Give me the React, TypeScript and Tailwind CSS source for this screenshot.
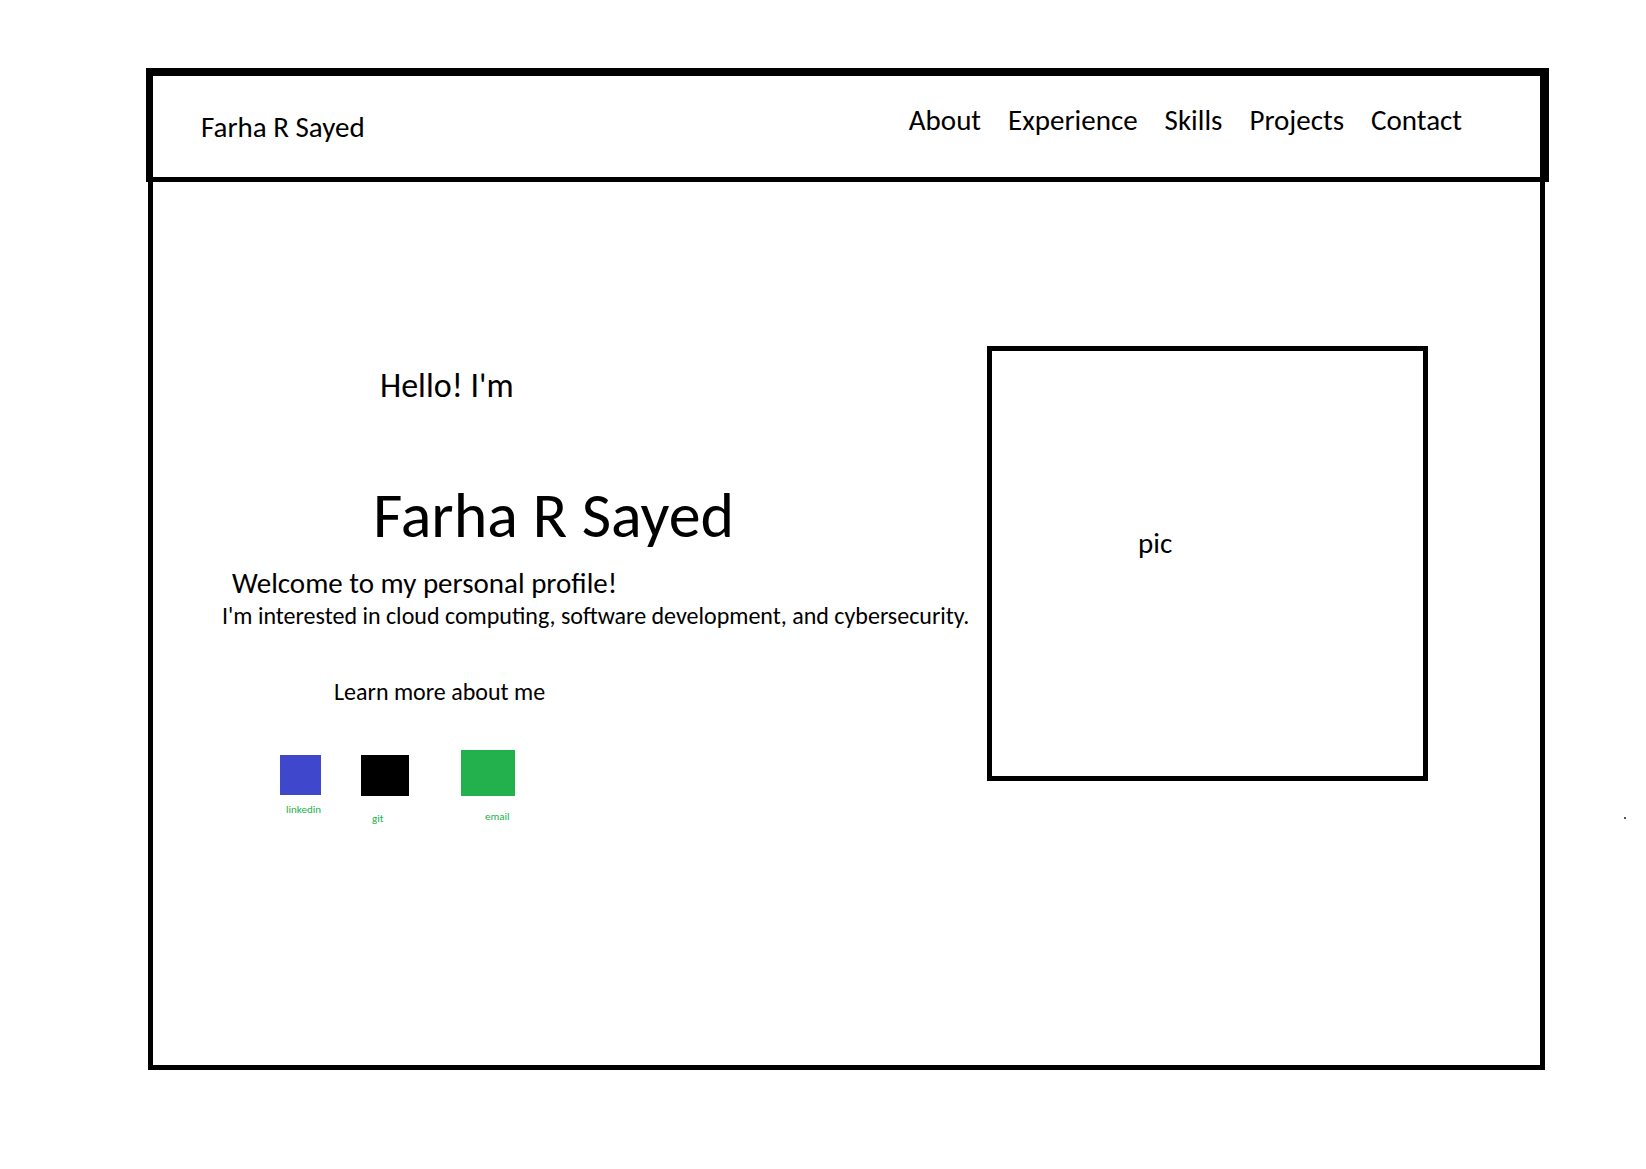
const navItems = ["About", "Experience", "Skills", "Projects", "Contact"];

function SocialLink({ label, block, text }: { label: string; block: string; text: string }) {
  return (
    <a href={`#${label}`} className="flex flex-col text-[11px] leading-3 text-[#22b14c]">
      <span className={block} />
      <span className={text}>{label}</span>
    </a>
  );
}

export default function App() {
  return (
    <div className="relative min-h-screen bg-white pt-[68px] pr-[97px] pb-[99px] pl-[146px] font-['Carlito','Lato',sans-serif] text-black">
      <header className="flex justify-between border-t-8 border-r-9 border-b-5 border-l-7 border-black pr-[78px] pb-[33px] pl-[48px]">
        <a href="#home" className="pt-[34px] text-[29px] leading-[34px]">Farha R Sayed</a>
        <nav className="flex gap-[27px] pt-[27px] text-[29px] leading-[34px]">
          {navItems.map((item) => (
            <a key={item} href={`#${item}`}>{item}</a>
          ))}
        </nav>
      </header>

      <main className="mr-[4px] ml-[2px] flex items-start border-r-5 border-b-5 border-l-5 border-black pt-[164px] pr-[112px] pb-[240px]">
        <section className="flex min-w-0 flex-1 flex-col items-start pt-[19px] whitespace-nowrap">
          <p className="ml-[227px] text-[34px] leading-[42px]">Hello! I'm</p>
          <h1 className="mt-[70px] ml-[220px] text-[64px] leading-[76px]">Farha R Sayed</h1>
          <p className="mt-[13px] ml-[79px] text-[29px] leading-[34px]">Welcome to my personal profile!</p>
          <p className="mt-px ml-[69px] text-[24px] leading-[30px]">I'm interested in cloud computing, software development, and cybersecurity.</p>
          <a href="#about" className="mt-[46px] ml-[181px] text-[24px] leading-[30px]">Learn more about me</a>
          <div className="mt-[43px] ml-[127px] flex items-start">
            <SocialLink label="linkedin" block="mt-[5px] h-[40px] w-[41px] bg-[#3f48cc]" text="mt-[9px] pl-[6px]" />
            <div className="ml-[40px]">
              <SocialLink label="git" block="mt-[5px] h-[41px] w-[48px] bg-black" text="mt-[17px] pl-[11px]" />
            </div>
            <div className="ml-[52px]">
              <SocialLink label="email" block="h-[46px] w-[54px] bg-[#22b14c]" text="mt-[15px] pl-[24px]" />
            </div>
          </div>
        </section>
        <div className="flex h-[435px] w-[441px] shrink-0 items-start border-5 border-black pt-[175px] pl-[146px] text-[29px] leading-[34px]">
          pic
        </div>
      </main>

      <span className="absolute top-[817px] right-[20px] size-[2px] bg-neutral-600" />
    </div>
  );
}
